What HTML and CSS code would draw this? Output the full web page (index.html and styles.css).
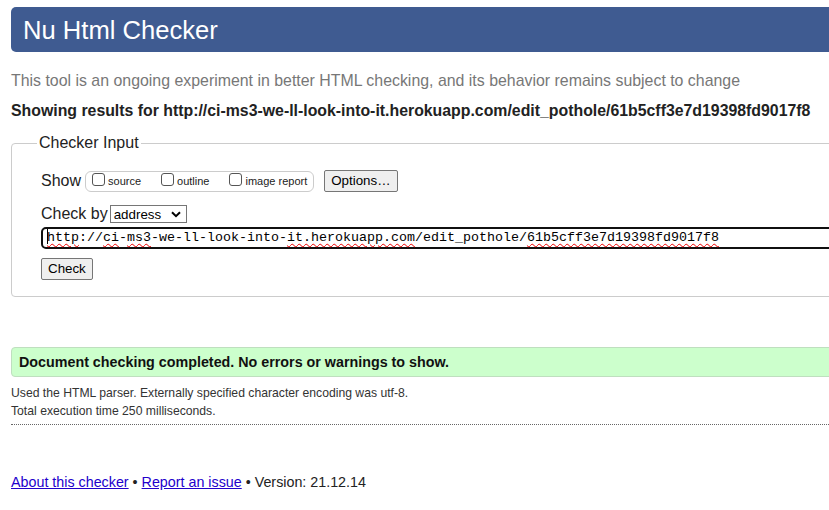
FILE: index.html
```html
<!DOCTYPE html>
<html>
<head>
<meta charset="utf-8">
<link rel="stylesheet" href="styles.css">
</head>
<body>
<div class="page">
  <h1 class="banner">Nu Html Checker</h1>
  <p class="intro">This tool is an ongoing experiment in better HTML checking, and its behavior remains subject to change</p>
  <p class="showing">Showing results for http://ci-ms3-we-ll-look-into-it.herokuapp.com/edit_pothole/61b5cff3e7d19398fd9017f8</p>
  <fieldset class="input-box">
    <legend>Checker Input</legend>
    <div class="row show-row">
      <span class="lbl">Show</span>
      <span class="opts">
        <label><span class="cb"></span>source</label>
        <label><span class="cb"></span>outline</label>
        <label><span class="cb"></span>image report</label>
      </span>
      <span class="btn">Options…</span>
    </div>
    <div class="row by-row">
      <span class="lbl">Check by</span>
      <span class="select">address<svg width="10" height="7" viewBox="0 0 10 7"><path d="M1 1.2 L5 5.2 L9 1.2" fill="none" stroke="#000" stroke-width="2"/></svg></span>
    </div>
    <div class="url"><span class="caret"></span><span class="sp">http</span>://<span class="sp">ci</span>-<span class="sp">ms3</span>-we-ll-look-into-<span class="sp">it.herokuapp.com</span>/edit_pothole/<span class="sp">61b5cff3e7d19398fd9017f8</span></div>
    <div class="row check-row"><span class="btn">Check</span></div>
  </fieldset>
  <p class="success">Document checking completed. No errors or warnings to show.</p>
  <p class="details">Used the HTML parser. Externally specified character encoding was utf-8.</p>
  <p class="details">Total execution time 250 milliseconds.</p>
  <hr class="rule">
  <p class="footer"><a href="#">About this checker</a> • <a href="#">Report an issue</a> • Version: 21.12.14</p>
</div>
</body>
</html>
```

FILE: styles.css
```css
html, body { margin: 0; padding: 0; overflow: hidden; background: #fff; }
body { font-family: "Liberation Sans", Arial, sans-serif; color: #222; }
.page { width: 900px; padding: 7px 0 0 11px; }
.banner {
  margin: 0; height: 45px; box-sizing: border-box;
  background: #3f5b91; color: #fff; border-radius: 5px 0 0 5px;
  font-weight: normal; font-size: 25.6px; line-height: 46px; padding-left: 12px;
}
.intro { margin: 19px 0 0; font-size: 15.9px; color: #777; line-height: 20px; }
.showing { margin: 10px 0 0; font-size: 15.85px; font-weight: bold; line-height: 20px; color: #222; }
.input-box {
  margin: 12px 0 0; padding: 0 0 16px 29px; border: 1px solid #ccc; border-radius: 4px 0 0 4px;
  width: 900px; box-sizing: border-box;
}
.input-box legend { font-size: 16px; padding: 0 2px; margin-left: -4px; line-height: 20px; color: #222; }
.row { display: flex; align-items: center; }
.lbl { font-size: 16px; }
.show-row { margin-top: 16px; height: 24px; }
.opts {
  display: flex; align-items: center; margin-left: 4px;
  border: 1px solid #ccc; border-radius: 6px; height: 21px; padding: 0 6px 0 6px; box-sizing: border-box;
}
.opts label { display: flex; align-items: center; font-size: 11px; margin-right: 20px; color: #222; }
.opts label:last-child { margin-right: 0; }
.cb { width: 13px; height: 13px; border: 1px solid #555; border-radius: 3px; margin-right: 3px; box-sizing: border-box; display: inline-block; position: relative; top: -2px; }
.btn {
  font-size: 13.33px; padding: 0 6px; height: 22px; line-height: 20px; box-sizing: border-box;
  border: 1px solid #767676; border-radius: 2px; background: #efefef; color: #000; display: inline-block;
}
.show-row .btn { margin-left: 10px; }
.by-row { margin-top: 11px; height: 20px; }
.select {
  margin-left: 2px; width: 77px; height: 18px; box-sizing: border-box; border: 1px solid #767676;
  font-size: 13.33px; display: flex; align-items: center; justify-content: space-between;
  padding: 0 5px 0 3px; color: #000;
}
.url {
  margin-top: 3px; width: 900px; height: 22px; box-sizing: border-box; border: 2px solid #101010; border-radius: 5px;
  font-family: "Liberation Mono", monospace; font-size: 13.33px; line-height: 18px; padding-left: 4px; color: #000;
  white-space: nowrap;
}
.caret { display: inline-block; width: 1px; height: 15px; background: #000; vertical-align: -3px; margin-right: -1px; }
.sp { text-decoration: underline wavy #e00; text-decoration-thickness: 1px; text-underline-offset: 2px; }
.check-row { margin-top: 9px; }
.success {
  margin: 50px 0 0; width: 900px; box-sizing: border-box; height: 30px; line-height: 28px;
  background: #ccffcc; border: 1px solid #bfdfbf; border-radius: 4px 0 0 4px;
  font-size: 14.3px; font-weight: bold; padding-left: 7px; color: #111;
}
.details { margin: 11px 0 0; font-size: 12.2px; line-height: 11px; color: #333; }
.details + .details { margin-top: 7px; }
.rule { margin: 7px 0 0; border: 0; border-top: 1px dotted #666; width: 900px; }
.footer { margin: 49px 0 0; font-size: 14.3px; color: #222; }
.footer a { color: #2200cc; }
```
